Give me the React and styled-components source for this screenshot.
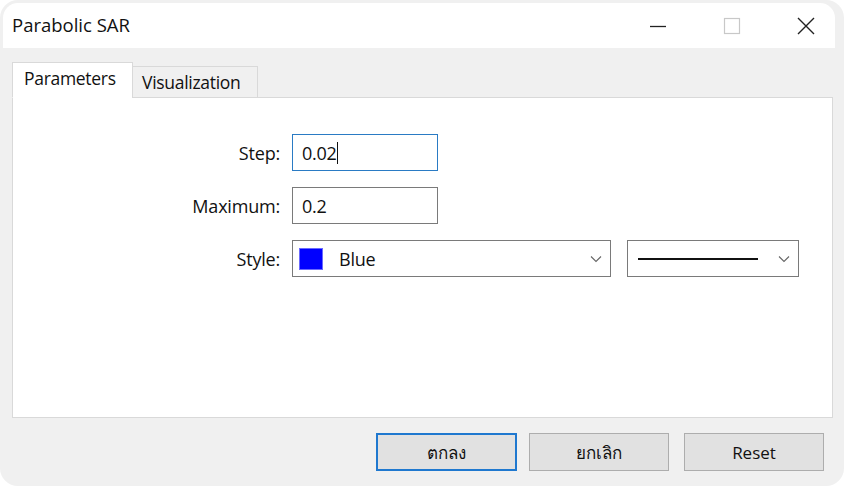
import React from 'react';
import styled, { createGlobalStyle } from 'styled-components';

const GlobalStyle = createGlobalStyle`
    html, body {
        margin: 0;
        padding: 0;
        background: #ffffff;
    }
    body {
        font-family: "Open Sans", "Noto Sans", "DejaVu Sans", sans-serif;
        color: #1a1a1a;
    }
`;

const App = () => {

    return (
        <>
            <GlobalStyle/>
            <WindowStyled>
                <TitleBar>
                    <Title>Parabolic SAR</Title>
                    <WinButtons>
                        <WinButton>
                            <svg width="18" height="18" viewBox="0 0 18 18">
                                <line x1="1" y1="9.5" x2="17" y2="9.5" stroke="#222" strokeWidth="1.3"/>
                            </svg>
                        </WinButton>
                        <WinButton>
                            <svg width="18" height="18" viewBox="0 0 18 18">
                                <rect x="1.5" y="1.5" width="15" height="15" fill="none" stroke="#c8c8c8" strokeWidth="1.2"/>
                            </svg>
                        </WinButton>
                        <WinButton>
                            <svg width="18" height="18" viewBox="0 0 18 18">
                                <path d="M1 1 L17 17 M17 1 L1 17" stroke="#222" strokeWidth="1.4" fill="none"/>
                            </svg>
                        </WinButton>
                    </WinButtons>
                </TitleBar>

                <Body>
                    <Tabs>
                        <Tab active>Parameters</Tab>
                        <Tab>Visualization</Tab>
                    </Tabs>
                    <Panel>
                        <FormGrid>
                            <Label>Step:</Label>
                            <TextBox focused>0.02<Caret/></TextBox>

                            <Label>Maximum:</Label>
                            <TextBox>0.2</TextBox>

                            <Label>Style:</Label>
                            <SelectRow>
                                <Select wide>
                                    <Swatch/>
                                    <SelectText>Blue</SelectText>
                                    <Chevron/>
                                </Select>
                                <Select>
                                    <LineSample/>
                                    <Chevron/>
                                </Select>
                            </SelectRow>
                        </FormGrid>
                    </Panel>
                    <Footer>
                        <Button primary>ตกลง</Button>
                        <Button>ยกเลิก</Button>
                        <Button>Reset</Button>
                    </Footer>
                </Body>
            </WindowStyled>
        </>
    );
}

const Chevron = () => (
    <ChevronWrap>
        <svg width="12" height="8" viewBox="0 0 12 8">
            <path d="M1 1.5 L6 6.5 L11 1.5" stroke="#666" strokeWidth="1.1" fill="none"/>
        </svg>
    </ChevronWrap>
);

export default App;

const WindowStyled = styled.div`
    width: 844px;
    height: 486px;
    box-sizing: border-box;
    background: #f0f0f0;
    border-radius: 18px;
    padding: 3px 9px 0 3px;
    display: flex;
    flex-direction: column;
    overflow: hidden;
`;

const TitleBar = styled.div`
    height: 45px;
    background: #ffffff;
    border-radius: 15px 15px 0 0;
    display: flex;
    align-items: center;
    justify-content: space-between;
    padding: 0 0 0 9px;
`;

const Title = styled.div`
    font-size: 18.5px;
    color: #111;
    padding-bottom: 2px;
`;

const WinButtons = styled.div`
    display: flex;
    align-items: center;
    gap: 56px;
    padding-right: 20px;
`;

const WinButton = styled.div`
    width: 18px;
    height: 18px;
    display: flex;
`;

const Body = styled.div`
    flex: 1;
    display: flex;
    flex-direction: column;
    padding: 15px 0 0 9px;
`;

const Tabs = styled.div`
    display: flex;
    align-items: flex-end;
    height: 35px;
    position: relative;
    z-index: 1;
    margin-bottom: -1px;
`;

const Tab = styled.div`
    box-sizing: border-box;
    height: ${p => p.active ? '36px' : '32px'};
    padding: ${p => p.active ? '0 6px 4px 11px' : '0 4px 1px 9px'};
    display: flex;
    align-items: center;
    font-size: 17.5px;
    letter-spacing: -0.3px;
    color: #111;
    white-space: nowrap;
    background: ${p => p.active ? '#ffffff' : '#f0f0f0'};
    border: 1px solid #d9d9d9;
    border-bottom: ${p => p.active ? '1px solid #ffffff' : '1px solid #d9d9d9'};
    margin-left: ${p => p.active ? '0' : '-1px'};
    width: ${p => p.active ? '121px' : '126px'};
`;

const Panel = styled.div`
    height: 321px;
    box-sizing: border-box;
    background: #ffffff;
    border: 1px solid #d9d9d9;
    margin-right: 2px;
    padding: 36px 0 0 0;
`;

const FormGrid = styled.div`
    display: grid;
    grid-template-columns: 267px auto;
    column-gap: 12px;
    row-gap: 16px;
    align-items: center;
`;

const Label = styled.div`
    text-align: right;
    font-size: 18px;
    letter-spacing: -0.2px;
    color: #111;
`;

const TextBox = styled.div`
    box-sizing: border-box;
    width: 146px;
    height: 37px;
    display: flex;
    align-items: center;
    padding-left: 9px;
    font-size: 18px;
    letter-spacing: -0.3px;
    color: #111;
    border: 1px solid ${p => p.focused ? '#2a7bc4' : '#7a7a7a'};
`;

const Caret = styled.span`
    width: 1px;
    height: 22px;
    background: #111;
    margin-left: 1px;
`;

const SelectRow = styled.div`
    display: flex;
    gap: 16px;
`;

const Select = styled.div`
    box-sizing: border-box;
    width: ${p => p.wide ? '319px' : '172px'};
    height: 37px;
    display: flex;
    align-items: center;
    padding: 0 8px 0 6px;
    border: 1px solid #7a7a7a;
    background: #ffffff;
`;

const Swatch = styled.div`
    width: 24px;
    height: 22px;
    box-sizing: border-box;
    background: #0000ff;
    border: 1px solid #6a6aff;
`;

const SelectText = styled.div`
    margin-left: 16px;
    font-size: 18px;
    letter-spacing: -0.2px;
    color: #111;
    flex: 1;
`;

const LineSample = styled.div`
    flex: 1;
    height: 2px;
    background: #111;
    margin: 0 20px 0 4px;
`;

const ChevronWrap = styled.div`
    display: flex;
    margin-left: auto;
`;

const Footer = styled.div`
    display: flex;
    justify-content: flex-end;
    gap: 12px;
    padding: 15px 11px 0 0;
`;

const Button = styled.div`
    box-sizing: border-box;
    width: ${p => p.primary ? '141px' : '140px'};
    height: 38px;
    display: flex;
    align-items: center;
    justify-content: center;
    font-size: 17px;
    color: #111;
    background: #e1e1e1;
    border: ${p => p.primary ? '2px solid #1f78cf' : '1px solid #adadad'};
    &:nth-child(3) { margin-left: 3px; }
`;
